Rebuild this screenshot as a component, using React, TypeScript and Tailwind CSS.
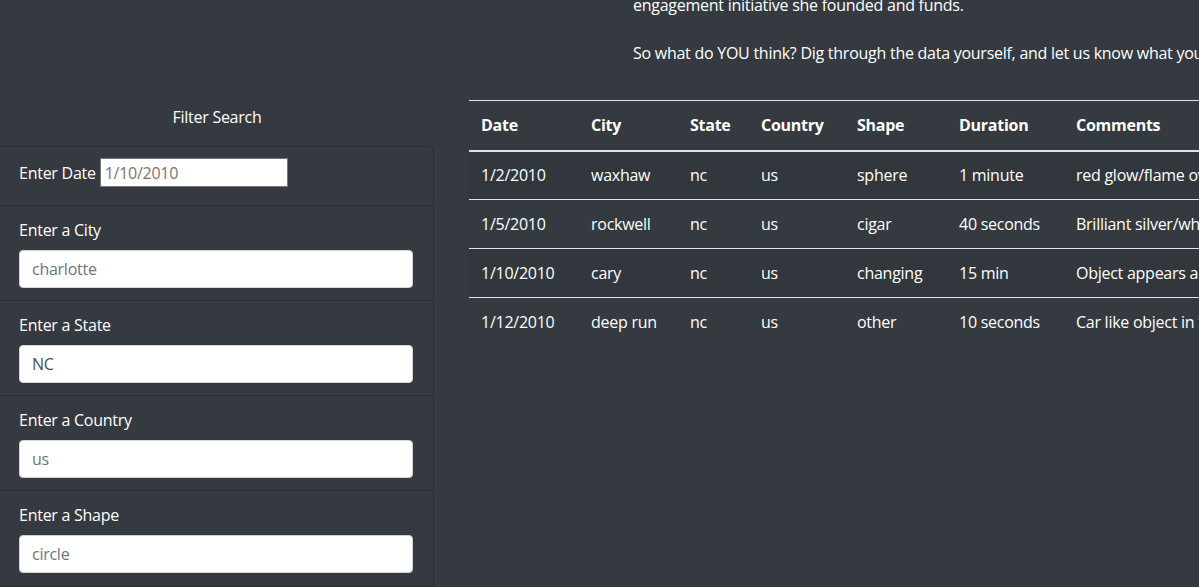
import React from "react";

const rows = [
  { date: "1/2/2010", city: "waxhaw", state: "nc", country: "us", shape: "sphere", duration: "1 minute", comments: "red glow/flame over waxhaw" },
  { date: "1/5/2010", city: "rockwell", state: "nc", country: "us", shape: "cigar", duration: "40 seconds", comments: "Brilliant silver/white object" },
  { date: "1/10/2010", city: "cary", state: "nc", country: "us", shape: "changing", duration: "15 min", comments: "Object appears and changes" },
  { date: "1/12/2010", city: "deep run", state: "nc", country: "us", shape: "other", duration: "10 seconds", comments: "Car like object in the sky" },
];

const filters = [
  { label: "Enter a City", placeholder: "charlotte", value: "" },
  { label: "Enter a State", placeholder: "", value: "NC" },
  { label: "Enter a Country", placeholder: "us", value: "" },
  { label: "Enter a Shape", placeholder: "circle", value: "" },
];

const widths = ["w-[110px]", "w-[99px]", "w-[71px]", "w-[96px]", "w-[102px]", "w-[117px]", "w-[300px]"];

export default function App() {
  return (
    <div className="min-h-screen w-full overflow-hidden bg-[#343a40] text-white font-['Segoe_UI','Open_Sans',sans-serif] text-base leading-6 tracking-[-0.26px]">
      {/* Intro text */}
      <div className="pl-[633px] mt-[-7px] whitespace-nowrap">
        <p>engagement initiative she founded and funds.</p>
        <p className="mt-6">
          So what do YOU think? Dig through the data yourself, and let us know what you think.
        </p>
      </div>

      <div className="flex mt-[35px]">
        {/* Filter panel */}
        <div className="w-[434px] shrink-0">
          <h5 className="pt-[5px] text-center">Filter Search</h5>
          <ul className="mt-[17px] border border-l-0 border-black/20 rounded-tr-md">
            <li className="px-[19px] pt-[11px] pb-[18px] border-b border-black/20">
              <div className="flex items-center h-[29px]">
                <label className="mr-1">Enter Date</label>
                <input
                  type="text"
                  placeholder="1/10/2010"
                  className="w-[188px] h-[29px] bg-white border border-[#767676] px-1 text-[#757575] placeholder:text-[#757575] outline-none"
                />
              </div>
            </li>
            {filters.map((f) => (
              <li key={f.label} className="px-[19px] pt-3 pb-3 border-b border-black/20 last:border-b-0">
                <label className="block mb-2">{f.label}</label>
                <input
                  type="text"
                  placeholder={f.placeholder}
                  defaultValue={f.value}
                  className="block w-[394px] h-[38px] bg-white border border-[#ced4da] rounded px-3 text-[#495057] placeholder:text-[#6c757d] outline-none"
                />
              </li>
            ))}
          </ul>
        </div>

        {/* Results table */}
        <div className="pl-[35px] min-w-0">
          <table className="border-collapse table-fixed w-[895px]">
            <thead>
              <tr className="border-t border-[#dee2e6] border-b-2">
                {["Date", "City", "State", "Country", "Shape", "Duration", "Comments"].map((h, i) => (
                  <th key={h} className={`${widths[i]} text-left font-bold px-3 h-[50px] whitespace-nowrap`}>
                    {h}
                  </th>
                ))}
              </tr>
            </thead>
            <tbody>
              {rows.map((r, i) => (
                <tr key={r.date} className={`${i > 0 ? "border-t border-[#dee2e6]" : ""} ${i % 2 === 0 ? "bg-black/5" : ""}`}>
                  {[r.date, r.city, r.state, r.country, r.shape, r.duration, r.comments].map((c, j) => (
                    <td key={j} className="px-3 h-[49px] whitespace-nowrap overflow-hidden">
                      {c}
                    </td>
                  ))}
                </tr>
              ))}
            </tbody>
          </table>
        </div>
      </div>
    </div>
  );
}
